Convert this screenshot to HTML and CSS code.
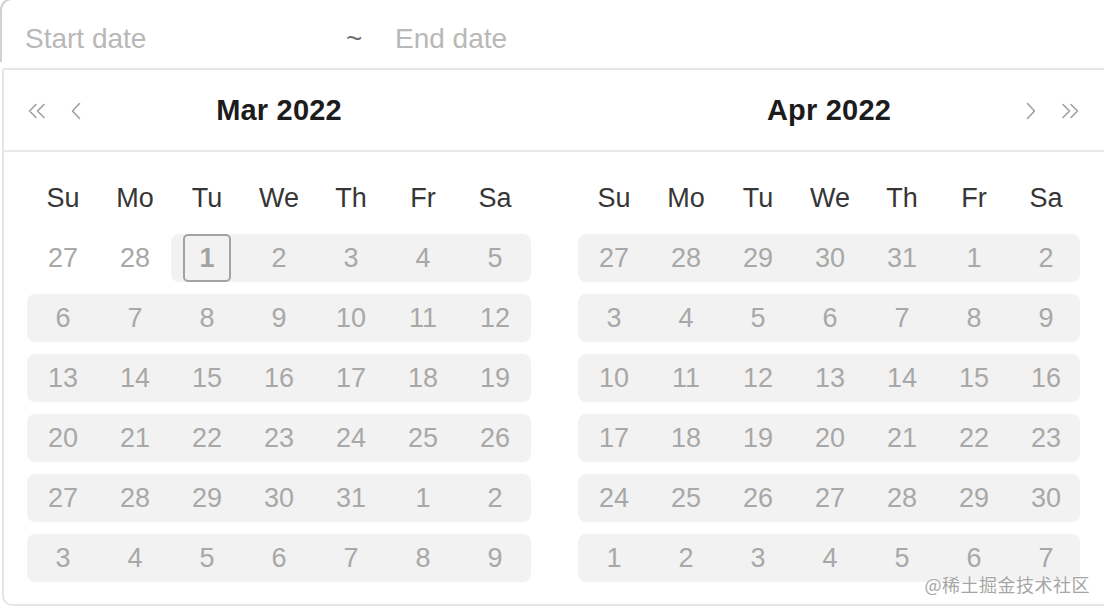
FILE: index.html
```html
<!DOCTYPE html>
<html>
<head>
<meta charset="utf-8">
<link rel="stylesheet" href="styles.css">
</head>
<body>
<div class="input">
  <span class="field">Start date</span>
  <span class="sep">~</span>
  <span class="field end">End date</span>
</div>
<div class="popup">
  <div class="headers">
    <div class="phead">
      <div class="navs">
        <svg class="ic dbl" width="20" height="16" viewBox="0 0 20 16"><path d="M9 1.5 L2.5 8 L9 14.5 M17 1.5 L10.5 8 L17 14.5" fill="none" stroke="#a0a0a0" stroke-width="1.6" stroke-linecap="round" stroke-linejoin="round"/></svg>
        <svg class="ic sgl" width="10" height="18" viewBox="0 0 10 18"><path d="M8.5 1.5 L1.5 9 L8.5 16.5" fill="none" stroke="#a0a0a0" stroke-width="1.6" stroke-linecap="round" stroke-linejoin="round"/></svg>
      </div>
      <div class="title">Mar 2022</div>
      <div class="navs right"></div>
    </div>
    <div class="phead second">
      <div class="navs"></div>
      <div class="title">Apr 2022</div>
      <div class="navs right">
        <svg class="ic sgl" width="10" height="18" viewBox="0 0 10 18"><path d="M1.5 1.5 L8.5 9 L1.5 16.5" fill="none" stroke="#a0a0a0" stroke-width="1.6" stroke-linecap="round" stroke-linejoin="round"/></svg>
        <svg class="ic dbl" width="20" height="16" viewBox="0 0 20 16"><path d="M3 1.5 L9.5 8 L3 14.5 M11 1.5 L17.5 8 L11 14.5" fill="none" stroke="#a0a0a0" stroke-width="1.6" stroke-linecap="round" stroke-linejoin="round"/></svg>
      </div>
    </div>
  </div>
  <div class="bodies">
    <div class="panel">
      <div class="wk"><span>Su</span><span>Mo</span><span>Tu</span><span>We</span><span>Th</span><span>Fr</span><span>Sa</span></div>
      <div class="row"><span class="c">27</span><span class="c">28</span><span class="c in start today"><b>1</b></span><span class="c in">2</span><span class="c in">3</span><span class="c in">4</span><span class="c in end">5</span></div>
      <div class="row full"><span class="c">6</span><span class="c">7</span><span class="c">8</span><span class="c">9</span><span class="c">10</span><span class="c">11</span><span class="c">12</span></div>
      <div class="row full"><span class="c">13</span><span class="c">14</span><span class="c">15</span><span class="c">16</span><span class="c">17</span><span class="c">18</span><span class="c">19</span></div>
      <div class="row full"><span class="c">20</span><span class="c">21</span><span class="c">22</span><span class="c">23</span><span class="c">24</span><span class="c">25</span><span class="c">26</span></div>
      <div class="row full"><span class="c">27</span><span class="c">28</span><span class="c">29</span><span class="c">30</span><span class="c">31</span><span class="c">1</span><span class="c">2</span></div>
      <div class="row full"><span class="c">3</span><span class="c">4</span><span class="c">5</span><span class="c">6</span><span class="c">7</span><span class="c">8</span><span class="c">9</span></div>
    </div>
    <div class="panel second">
      <div class="wk"><span>Su</span><span>Mo</span><span>Tu</span><span>We</span><span>Th</span><span>Fr</span><span>Sa</span></div>
      <div class="row full"><span class="c">27</span><span class="c">28</span><span class="c">29</span><span class="c">30</span><span class="c">31</span><span class="c">1</span><span class="c">2</span></div>
      <div class="row full"><span class="c">3</span><span class="c">4</span><span class="c">5</span><span class="c">6</span><span class="c">7</span><span class="c">8</span><span class="c">9</span></div>
      <div class="row full"><span class="c">10</span><span class="c">11</span><span class="c">12</span><span class="c">13</span><span class="c">14</span><span class="c">15</span><span class="c">16</span></div>
      <div class="row full"><span class="c">17</span><span class="c">18</span><span class="c">19</span><span class="c">20</span><span class="c">21</span><span class="c">22</span><span class="c">23</span></div>
      <div class="row full"><span class="c">24</span><span class="c">25</span><span class="c">26</span><span class="c">27</span><span class="c">28</span><span class="c">29</span><span class="c">30</span></div>
      <div class="row full"><span class="c">1</span><span class="c">2</span><span class="c">3</span><span class="c">4</span><span class="c">5</span><span class="c">6</span><span class="c">7</span></div>
    </div>
  </div>
  <div class="watermark">@稀土掘金技术社区</div>
</div>
</body>
</html>
```
FILE: styles.css
```css
html, body {
  margin: 0;
  padding: 0;
  background: #ffffff;
  overflow: hidden;
  width: 1104px;
  height: 608px;
}
body {
  font-family: "Liberation Sans", Arial, sans-serif;
  position: relative;
}
.input {
  display: flex;
  align-items: center;
  box-sizing: border-box;
  height: 64px;
  margin-top: -2px;
  padding: 16px 0 0 23px;
  border-left: 2px solid #d2d2d2;
  border-top: 2px solid #d2d2d2;
  border-top-left-radius: 12px;
  font-size: 28px;
  color: #b8b8b8;
}
.input .field {
  width: 321px;
}
.input .sep {
  width: 16px;
  margin-right: 33px;
  color: #707070;
}
.input .end {
  width: auto;
}
.popup {
  position: relative;
  margin-top: 6px;
  margin-left: 2px;
  width: 1110px;
  height: 538px;
  box-sizing: border-box;
  border: 2px solid #e6e6e6;
  border-right: none;
  border-radius: 2px 0 0 10px;
}
.headers {
  display: flex;
  height: 80px;
  border-bottom: 2px solid #e8e8e8;
}
.phead {
  width: 550px;
  box-sizing: border-box;
  padding: 0 23px;
  display: grid;
  grid-template-columns: 1fr auto 1fr;
  align-items: center;
}
.phead.second {
  padding: 0 24px;
}
.navs {
  display: flex;
  align-items: center;
  gap: 24px;
}
.navs.right {
  justify-content: flex-end;
  gap: 24px;
}
.ic {
  display: block;
  margin-top: 2px;
}
.title {
  font-size: 29px;
  font-weight: bold;
  color: #1c1c1c;
  letter-spacing: 0.2px;
}
.bodies {
  display: flex;
}
.panel {
  width: 550px;
  box-sizing: border-box;
  padding: 16px 23px 0;
  display: flex;
  flex-direction: column;
}
.panel.second {
  padding: 16px 24px 0;
}
.wk, .row {
  display: grid;
  grid-template-columns: repeat(7, 72px);
}
.wk span {
  height: 60px;
  line-height: 60px;
  text-align: center;
  font-size: 27px;
  color: #363636;
}
.row {
  height: 48px;
  margin: 6px 0;
  border-radius: 8px;
}
.row.full {
  background: #f2f2f2;
}
.c {
  display: flex;
  align-items: center;
  justify-content: center;
  height: 48px;
  font-size: 27px;
  color: #a8a8a8;
}
.c.in {
  background: #f2f2f2;
}
.c.start {
  border-radius: 8px 0 0 8px;
}
.c.end {
  border-radius: 0 8px 8px 0;
}
.today b {
  display: flex;
  align-items: center;
  justify-content: center;
  width: 48px;
  height: 48px;
  box-sizing: border-box;
  border: 2px solid #a3a3a3;
  border-radius: 5px;
  font-weight: bold;
  color: #a3a3a3;
}
.watermark {
  position: absolute;
  right: 22px;
  bottom: 7px;
  font-family: "Noto Sans CJK SC", sans-serif;
  font-size: 18px;
  color: #a6a6a6;
  text-shadow: 0 0 2px #fff, 0 0 2px #fff;
  letter-spacing: 0.5px;
}
```
